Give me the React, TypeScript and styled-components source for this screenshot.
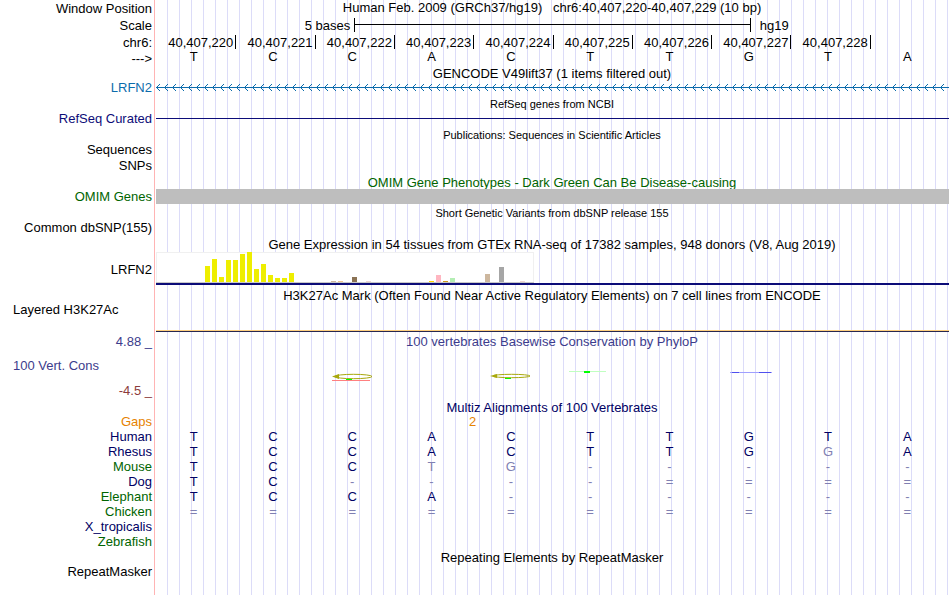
import React from "react";
import styled, { createGlobalStyle } from "styled-components";

const Global = createGlobalStyle`
  body { margin: 0; background: #fff; font-family: "Liberation Sans", Arial, Helvetica, sans-serif; font-size: 13px; line-height: 15px; color: #000; }
`;

const Browser = styled.main`
  min-height: 100vh;
  padding-right: 1px;
  box-sizing: border-box;
  background:
    linear-gradient(#ffb4b4, #ffb4b4) 154px 0 / 1px 100% no-repeat,
    linear-gradient(#fff, #fff) 0 0 / 156px 100% no-repeat,
    linear-gradient(90deg, #dcdcf8 1px, transparent 1px) 11px 0 / 12px 100%;
`;

const Row = styled.div<{ $h?: number }>`
  display: grid;
  grid-template-columns: 152px minmax(0, 1fr);
  grid-template-rows: 100%;
  column-gap: 4px;
  height: ${(p) => p.$h ?? 15}px;
`;

const Label = styled.div<{ $color?: string; $left?: boolean; $top?: number }>`
  text-align: ${(p) => (p.$left ? "left" : "right")};
  padding-left: ${(p) => (p.$left ? 13 : 0)}px;
  padding-top: ${(p) => p.$top ?? 0}px;
  color: ${(p) => p.$color ?? "#000"};
  white-space: nowrap;
`;

const Title = styled.div<{ $color?: string; $small?: boolean; $top?: number }>`
  text-align: center;
  white-space: pre;
  padding-top: ${(p) => p.$top ?? 0}px;
  padding-right: 1px;
  font-size: ${(p) => (p.$small ? 11 : 13)}px;
  color: ${(p) => p.$color ?? "#000"};
`;

const Scale = styled.div`
  display: grid;
  grid-template-columns: 25fr 50fr 25fr;
`;
const ScaleText = styled.span<{ $end?: boolean }>`
  text-align: ${(p) => (p.$end ? "right" : "left")};
  padding: ${(p) => (p.$end ? "0 4px 0 0" : "0 0 0 9px")};
`;
const ScaleBar = styled.div`
  height: 14px;
  box-sizing: border-box;
  border: solid #000;
  border-width: 0 1px;
  background: linear-gradient(#000, #000) 0 6px / 100% 1px no-repeat;
`;

const Cells = styled.div`
  display: grid;
  grid-template-columns: repeat(10, minmax(0, 1fr));
`;
const Tick = styled.span`
  height: 14px;
  text-align: right;
  padding-right: 2px;
  margin-right: -1px;
  border-right: 1px solid #000;
`;
const Base = styled.span<{ $color: string }>`
  text-align: center;
  padding-right: 4px;
  color: ${(p) => p.$color};
`;

const Line = styled.div<{ $color: string; $top: number; $thick?: number }>`
  height: ${(p) => p.$thick ?? 1}px;
  margin-top: ${(p) => p.$top}px;
  background: ${(p) => p.$color};
`;
const Drawing = styled.svg`
  display: block;
  width: 100%;
  height: 100%;
`;
const Expression = styled.div`
  box-sizing: border-box;
  height: 33px;
  border-bottom: 2px solid #0c0c78;
`;
const Signal = styled.div`
  align-self: end;
  height: 1px;
  border-top: 1px solid #ffd080;
  background: #282850;
`;
const Conservation = styled.section`
  display: grid;
  grid-template-columns: 152px minmax(0, 1fr);
  grid-template-rows: 25px 25px 18px;
  column-gap: 4px;
`;
const Logos = styled(Cells)`
  grid-column: 2;
  grid-row: 2 / 4;
`;
const Gap = styled.span`
  grid-column: 4 / 6;
  text-align: center;
  padding-right: 1px;
  color: #e68200;
`;

const navy = "#000064";
const green = "#006400";
const pale = "#8080b2";
const positions = Array.from({ length: 9 }, (_, i) => `40,407,22${i}`);

const bars: [number, number, string][] = [
  [49, 16, "#eeee00"], [56, 23, "#eeee00"], [63, 5, "#eeee00"], [70, 22, "#eeee00"],
  [77, 22, "#eeee00"], [84, 28, "#eeee00"], [91, 30, "#eeee00"], [98, 13, "#eeee00"],
  [105, 18, "#eeee00"], [112, 7, "#eeee00"], [119, 4, "#eeee00"], [126, 4, "#eeee00"],
  [133, 9, "#eeee00"], [175, 1, "#cdb79e"], [182, 1, "#eec591"], [196, 5, "#8b7355"],
  [210, 1, "#eed5d2"], [273, 1, "#ffd700"], [280, 7, "#ffb6c1"], [287, 1, "#cd9b1d"],
  [294, 4, "#b4eeb4"], [329, 8, "#cdb79e"], [343, 15, "#a6a6a6"], [364, 1, "#eed5d2"],
];

const alignments: [string, string, string][] = [
  ["Human", "TCCACTTGTA", ".........."],
  ["Rhesus", "TCCACTTGGA", "........x."],
  ["Mouse", "TCCTG-----", "...xxxxxxx"],
  ["Dog", "TC----====", "..xxxxxxxx"],
  ["Elephant", "TCCA------", "....xxxxxx"],
  ["Chicken", "==========", "xxxxxxxxxx"],
  ["X_tropicalis", "", ""],
  ["Zebrafish", "", ""],
];
const greenSpecies = ["Mouse", "Elephant", "Chicken", "Zebrafish"];

function Bases({ text, mask = "" }: { text: string; mask?: string }) {
  return (
    <Cells>
      {[...text].map((b, i) => (
        <Base key={i} $color={mask ? (mask[i] === "x" ? pale : navy) : "#000"}>{b}</Base>
      ))}
    </Cells>
  );
}

function Chevrons() {
  return (
    <Drawing aria-hidden="true" shapeRendering="crispEdges">
      <defs>
        <pattern id="chevrons" width="8" height="15" patternUnits="userSpaceOnUse">
          <path d="M0 7h8v1H0zM1 6h1v1H1zM2 5h1v1H2zM3 4h1v1H3zM1 8h1v1H1zM2 9h1v1H2zM3 10h1v1H3z" fill="#0c6cac" />
        </pattern>
      </defs>
      <rect width="100%" height="15" fill="url(#chevrons)" />
    </Drawing>
  );
}

function ExpressionChart() {
  return (
    <Drawing aria-hidden="true" shapeRendering="crispEdges">
      <rect width="378" height="31" fill="#f0f0f0" />
      <rect x="1" y="1" width="376" height="29" fill="#fff" />
      <rect y="30" width="378" height="1" fill="#c8c8c8" />
      {bars.map(([x, h, fill]) => (
        <rect key={x} x={x} y={30 - h} width="5" height={h} fill={fill} />
      ))}
    </Drawing>
  );
}

function BaseLogo({ kind }: { kind: "C" | "c" | "T" | "G" | "" }) {
  return (
    <Drawing aria-hidden="true">
      {kind === "C" && (
        <g>
          <ellipse cx="38.5" cy="19.5" rx="18.5" ry="2.2" fill="none" stroke="#a8a80c" />
          <path d="M17 19.5l7-2.5v5z" fill="#a8a80c" />
          <path d="M31 22h6v1h-6z" fill="#00ff00" />
          <path d="M17 23h38v1H17z" fill="#ff8080" />
        </g>
      )}
      {kind === "c" && (
        <g>
          <ellipse cx="38.5" cy="19" rx="18.5" ry="1.7" fill="none" stroke="#a8a80c" />
          <path d="M17 19l7-2v4z" fill="#a8a80c" />
          <path d="M32 21h6v1h-6z" fill="#00ff00" />
        </g>
      )}
      {kind === "T" && (
        <g>
          <path d="M16 14h37v1H16z" fill="#c0ffc0" />
          <path d="M31 14h6v2h-6z" fill="#00ff00" />
        </g>
      )}
      {kind === "G" && (
        <g>
          <path d="M19 15h42v1H19z" fill="#a0a0ff" />
          <path d="M21 15h7v1h-7zM48 15h12v1H48z" fill="#5050ee" />
        </g>
      )}
    </Drawing>
  );
}

export default function App() {
  return (
    <>
      <Global />
      <Browser>
        <Row $h={18}>
          <Label $top={1}>Window Position</Label>
          <Title>{"Human Feb. 2009 (GRCh37/hg19)   chr6:40,407,220-40,407,229 (10 bp)"}</Title>
        </Row>
        <Row $h={17}>
          <Label>Scale</Label>
          <Scale><ScaleText $end>5 bases</ScaleText><ScaleBar /><ScaleText>hg19</ScaleText></Scale>
        </Row>
        <Row $h={14}>
          <Label>chr6:</Label>
          <Cells>{positions.map((p) => <Tick key={p}>{p}</Tick>)}</Cells>
        </Row>
        <Row $h={17}><Label $top={2}>---&gt;</Label><Bases text="TCCACTTGTA" /></Row>
        <Row $h={14}><span /><Title>GENCODE V49lift37 (1 items filtered out)</Title></Row>
        <Row $h={17}><Label $color="#0c6cac">LRFN2</Label><Chevrons /></Row>
        <Row $h={14}><span /><Title $small>RefSeq genes from NCBI</Title></Row>
        <Row $h={17}><Label $color="#0c0c78">RefSeq Curated</Label><Line $color="#0c0c78" $top={7} /></Row>
        <Row $h={14}><span /><Title $small>Publications: Sequences in Scientific Articles</Title></Row>
        <Row $h={16}><Label>Sequences</Label></Row>
        <Row $h={17}><Label>SNPs</Label></Row>
        <Row $h={14}><span /><Title $color={green}>OMIM Gene Phenotypes - Dark Green Can Be Disease-causing</Title></Row>
        <Row $h={17}><Label $color={green}>OMIM Genes</Label><Line $color="#bebebe" $top={0} $thick={15} /></Row>
        <Row $h={14}><span /><Title $small>Short Genetic Variants from dbSNP release 155</Title></Row>
        <Row $h={17}><Label>Common dbSNP(155)</Label></Row>
        <Row $h={15}><span /><Title>Gene Expression in 54 tissues from GTEx RNA-seq of 17382 samples, 948 donors (V8, Aug 2019)</Title></Row>
        <Row $h={33}><Label $top={10}>LRFN2</Label><Expression><ExpressionChart /></Expression></Row>
        <Row $h={17}><span /><Title $top={3}>H3K27Ac Mark (Often Found Near Active Regulatory Elements) on 7 cell lines from ENCODE</Title></Row>
        <Row $h={30}><Label $left>Layered H3K27Ac</Label><Signal /></Row>
        <Conservation>
          <Label $color="#3c3c8c" $top={2}>4.88 _</Label>
          <Title $color="#3c3c8c" $top={2}>100 vertebrates Basewise Conservation by PhyloP</Title>
          <Label $left $color="#3c3c8c" $top={1}>100 Vert. Cons</Label>
          <Label $color="#8c3c3c" $top={1}>-4.5 _</Label>
          <Logos>
            {(["", "", "C", "", "c", "T", "", "G", "", ""] as const).map((k, i) => <BaseLogo key={i} kind={k} />)}
          </Logos>
        </Conservation>
        <Row $h={14}><span /><Title $color={navy}>Multiz Alignments of 100 Vertebrates</Title></Row>
        <Row><Label $color="#e68200">Gaps</Label><Cells><Gap>2</Gap></Cells></Row>
        {alignments.map(([name, text, mask]) => (
          <Row key={name}>
            <Label $color={greenSpecies.includes(name) ? green : navy}>{name}</Label>
            <Bases text={text} mask={mask} />
          </Row>
        ))}
        <Row><span /><Title $top={1}>Repeating Elements by RepeatMasker</Title></Row>
        <Row><Label>RepeatMasker</Label></Row>
      </Browser>
    </>
  );
}
